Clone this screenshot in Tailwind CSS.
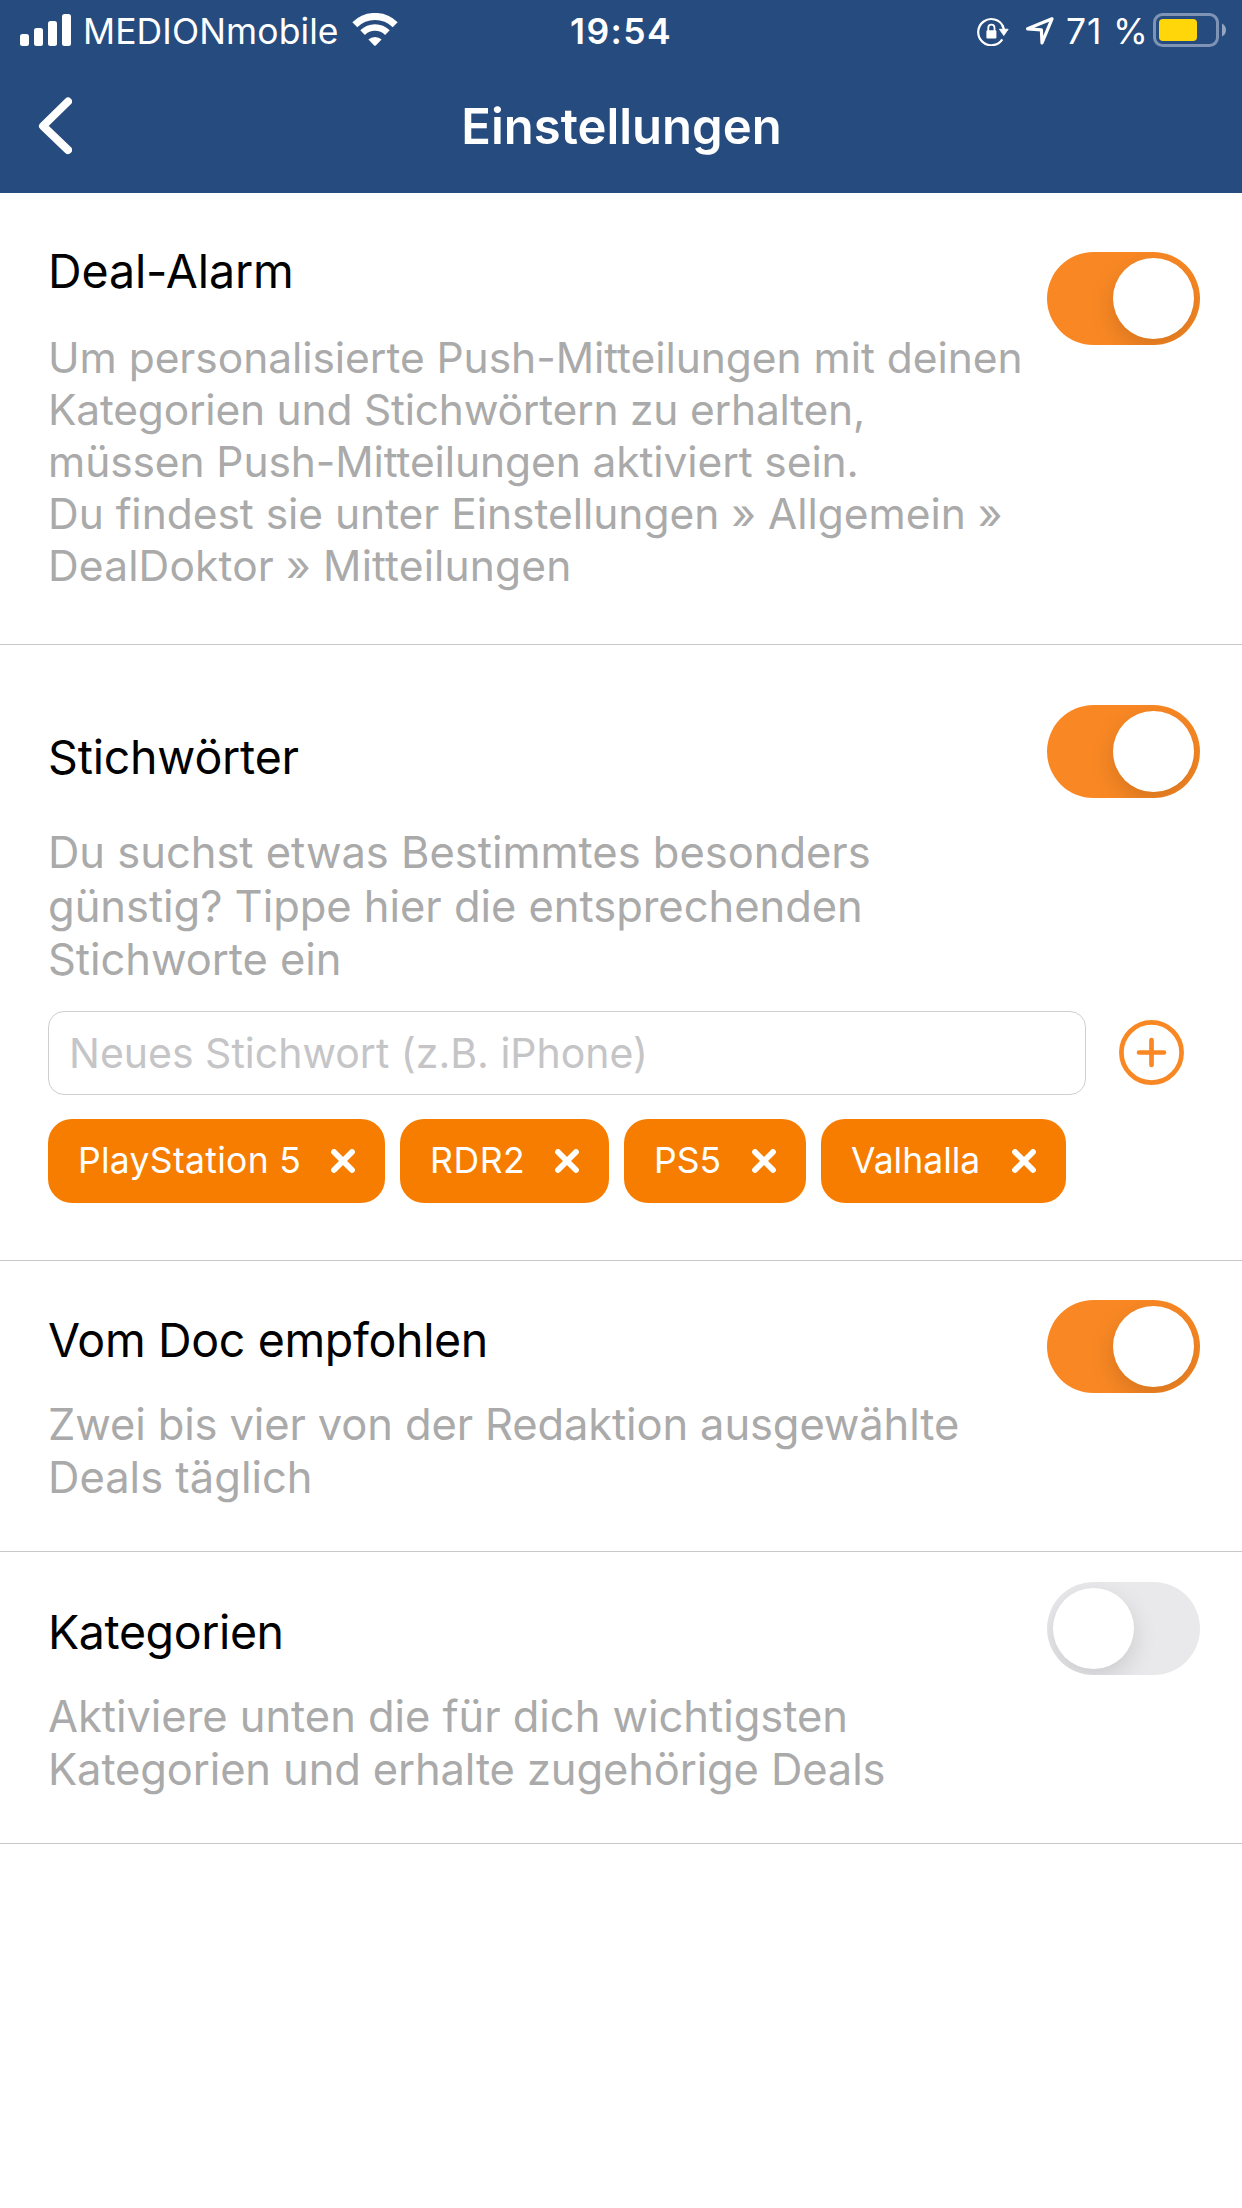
<!DOCTYPE html>
<html lang="de">
<head>
<meta charset="utf-8">
<title>Einstellungen</title>
<script src="https://cdn.jsdelivr.net/npm/@tailwindcss/browser@4"></script>
</head>
<body class="w-[1242px] h-[2208px] overflow-hidden bg-white font-['Inter',sans-serif] text-black">

<header class="h-[193px] bg-[#264b7e] text-white">
  <!-- status bar -->
  <div class="grid h-[66px] grid-cols-[1fr_auto_1fr] pt-[10px] text-[35.5px] leading-[43px] whitespace-nowrap">
    <div class="flex pl-5">
      <svg class="mt-1 h-8 w-[51px]" viewBox="0 0 51 32" fill="#fff">
        <rect x="0" y="20" width="9" height="12" rx="2.5"/><rect x="14" y="14" width="9" height="18" rx="2.5"/><rect x="28" y="7" width="9" height="25" rx="2.5"/><rect x="42" y="0" width="9" height="32" rx="2.5"/>
      </svg>
      <span class="ml-3 w-[257px] tracking-[0.1px]">MEDIONmobile</span>
      <svg class="ml-[12px] mt-[3px] h-[33px] w-[46px]" viewBox="0 0 46 33" fill="none" stroke="#fff">
        <path d="M2.8 11.7A28.8 28.8 0 0 1 43.2 11.7" stroke-width="7"/>
        <path d="M10.6 19.6A17.7 17.7 0 0 1 35.4 19.6" stroke-width="6.6"/>
        <path d="M16.4 26.6A9.6 9.6 0 0 1 29.6 26.6L23.8 32.4Q23 33 22.2 32.4Z" fill="#fff" stroke="none"/>
      </svg>
    </div>
    <span class="font-semibold tracking-[1.4px]">19:54</span>
    <div class="flex justify-end pr-4">
      <svg class="mt-[7px] h-[29px] w-[32px]" viewBox="0 0 32 29" fill="none" stroke="#fff">
        <path d="M25.3 22.3A13.1 13.1 0 1 1 26.2 9.6" stroke-width="2.2"/>
        <path d="M22.4 12.2H31.2L26.8 18.6Z" fill="#fff" stroke-width="0.8" stroke-linejoin="round"/>
        <path d="M25.2 8.4Q26.8 10.8 27 13" stroke-width="2.4"/>
        <rect x="9.4" y="13.3" width="10" height="8.2" rx="1.2" fill="#fff" stroke="none"/>
        <path d="M11.3 14V10.8A3.1 3.1 0 0 1 17.5 10.8V14" stroke-width="1.8"/>
      </svg>
      <svg class="ml-[16px] mt-[6px] h-[30px] w-[30px]" viewBox="0 0 30 30" fill="none">
        <path d="M27 2.8L2.6 12.8L16.4 13.9L17 27Z" stroke="#fff" stroke-width="3.2" stroke-linejoin="round"/>
      </svg>
      <span class="ml-[11px] w-[87px] tracking-[0.8px]">71 %</span>
      <svg class="mt-[3px] h-[34px] w-[73px]" viewBox="0 0 73 34">
        <rect x="1.5" y="1.5" width="63" height="31" rx="8" fill="none" stroke="#7f94b4" stroke-width="3"/>
        <rect x="6" y="6" width="38" height="22" rx="4" fill="#ffd60a"/>
        <path d="M69 10.5Q73 12.5 73 17T69 23.5Z" fill="#93a5bf"/>
      </svg>
    </div>
  </div>
  <!-- navigation bar -->
  <div class="grid h-[127px] grid-cols-[1fr_auto_1fr]">
    <div class="pl-[38px] pt-[31px]">
      <svg class="h-[58px] w-[34px]" viewBox="0 0 34 58" fill="none" stroke="#fff" stroke-width="8" stroke-linecap="round" stroke-linejoin="round"><path d="M30 4.5L5 29L30 53"/></svg>
    </div>
    <h1 class="pt-[31px] pl-px text-[49px] leading-[60px] font-semibold">Einstellungen</h1>
  </div>
</header>

<main>
  <section class="flex h-[452px] justify-between border-b border-[#c8c7cc] pr-[42px] pl-12 whitespace-nowrap">
    <div class="pt-[50px]">
      <h2 class="text-[46.5px] leading-[56px] tracking-[-0.1px]">Deal-Alarm</h2>
      <p class="mt-[33px] text-[42.5px] leading-[52px] text-[#aaa]">
        <span class="block tracking-[-0.05px]">Um personalisierte Push-Mitteilungen mit deinen</span>
        <span class="block tracking-[-0.22px]">Kategorien und Stichwörtern zu erhalten,</span>
        <span class="block tracking-[-0.1px]">müssen Push-Mitteilungen aktiviert sein.</span>
        <span class="block tracking-[-0.03px]">Du findest sie unter Einstellungen » Allgemein »</span>
        <span class="block tracking-[0.15px]">DealDoktor » Mitteilungen</span>
      </p>
    </div>
    <button class="mt-[59px] flex h-[93px] w-[153px] shrink-0 justify-end overflow-hidden rounded-full bg-[#f98824] p-[6px]"><span class="size-[81px] rounded-full bg-white shadow-[0_9px_24px_rgba(0,0,0,0.15)]"></span></button>
  </section>

  <section class="h-[616px] border-b border-[#c8c7cc] pr-[42px] pl-12 whitespace-nowrap">
    <div class="flex h-[366px] justify-between">
      <div class="pt-[84px]">
        <h2 class="text-[46.5px] leading-[56px] tracking-[-0.2px]">Stichwörter</h2>
        <p class="mt-[41px] text-[43.5px] leading-[53.5px] text-[#aaa]">
          <span class="block tracking-[-0.03px]">Du suchst etwas Bestimmtes besonders</span>
          <span class="block tracking-[-0.04px]">günstig? Tippe hier die entsprechenden</span>
          <span class="block tracking-[-0.05px]">Stichworte ein</span>
        </p>
      </div>
      <button class="mt-[60px] flex h-[93px] w-[153px] shrink-0 justify-end overflow-hidden rounded-full bg-[#f98824] p-[6px]"><span class="size-[81px] rounded-full bg-white shadow-[0_9px_24px_rgba(0,0,0,0.15)]"></span></button>
    </div>
    <div class="flex">
      <div class="h-[84px] w-[1038px] rounded-[16px] border border-[#cfcfcf] pt-[16px] pl-[20px] text-[41px] leading-[50px] text-[#c5c5c7]">Neues Stichwort (z.B. iPhone)</div>
      <svg class="mt-[9px] ml-[33px] size-[65px]" viewBox="0 0 65 65" fill="none" stroke="#f98824" stroke-width="4.7" stroke-linecap="round"><circle cx="32.5" cy="32.5" r="30.1"/><path d="M32.5 20V45M20 32.5H45"/></svg>
    </div>
    <div class="mt-[24px] flex gap-[15px] text-[35.5px] leading-[43px] text-white">
      <div class="flex h-[84px] w-[337px] items-center justify-between rounded-[24px] bg-[#f77d00] pr-[30px] pl-[30px]"><span class="-mt-px tracking-[0.3px]">PlayStation 5</span><svg class="size-6" viewBox="0 0 24 24" stroke="#fff" stroke-width="5.8" stroke-linecap="round"><path d="M3 3L21 21M21 3L3 21"/></svg></div>
      <div class="flex h-[84px] w-[209px] items-center justify-between rounded-[24px] bg-[#f77d00] pr-[30px] pl-[30px]"><span class="-mt-px tracking-[0.6px]">RDR2</span><svg class="size-6" viewBox="0 0 24 24" stroke="#fff" stroke-width="5.8" stroke-linecap="round"><path d="M3 3L21 21M21 3L3 21"/></svg></div>
      <div class="flex h-[84px] w-[182px] items-center justify-between rounded-[24px] bg-[#f77d00] pr-[30px] pl-[30px]"><span class="-mt-px">PS5</span><svg class="size-6" viewBox="0 0 24 24" stroke="#fff" stroke-width="5.8" stroke-linecap="round"><path d="M3 3L21 21M21 3L3 21"/></svg></div>
      <div class="flex h-[84px] w-[245px] items-center justify-between rounded-[24px] bg-[#f77d00] pr-[30px] pl-[30px]"><span class="-mt-px">Valhalla</span><svg class="size-6" viewBox="0 0 24 24" stroke="#fff" stroke-width="5.8" stroke-linecap="round"><path d="M3 3L21 21M21 3L3 21"/></svg></div>
    </div>
  </section>

  <section class="flex h-[291px] justify-between border-b border-[#c8c7cc] pr-[42px] pl-12 whitespace-nowrap">
    <div class="pt-[51px]">
      <h2 class="text-[46.5px] leading-[56px] tracking-[-0.35px]">Vom Doc empfohlen</h2>
      <p class="mt-[30px] text-[43.5px] leading-[53px] text-[#aaa]">
        <span class="block tracking-[-0.13px]">Zwei bis vier von der Redaktion ausgewählte</span>
        <span class="block">Deals täglich</span>
      </p>
    </div>
    <button class="mt-[39px] flex h-[93px] w-[153px] shrink-0 justify-end overflow-hidden rounded-full bg-[#f98824] p-[6px]"><span class="size-[81px] rounded-full bg-white shadow-[0_9px_24px_rgba(0,0,0,0.15)]"></span></button>
  </section>

  <section class="flex h-[292px] justify-between border-b border-[#c8c7cc] pr-[42px] pl-12 whitespace-nowrap">
    <div class="pt-[52px]">
      <h2 class="text-[46.5px] leading-[56px] tracking-[-0.4px]">Kategorien</h2>
      <p class="mt-[30px] text-[43.5px] leading-[53px] text-[#aaa]">
        <span class="block tracking-[-0.05px]">Aktiviere unten die für dich wichtigsten</span>
        <span class="block tracking-[-0.13px]">Kategorien und erhalte zugehörige Deals</span>
      </p>
    </div>
    <button class="mt-[30px] flex h-[93px] w-[153px] shrink-0 overflow-hidden rounded-full bg-[#e9e9eb] p-[6px]"><span class="size-[81px] rounded-full bg-white shadow-[0_9px_24px_rgba(0,0,0,0.13)]"></span></button>
  </section>
</main>
</body>
</html>
